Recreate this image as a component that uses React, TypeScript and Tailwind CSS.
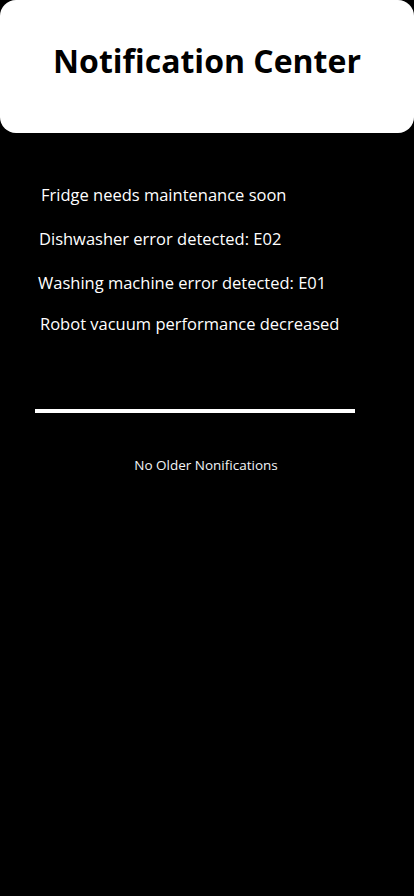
import React from "react";

const items = [
  { text: "Fridge needs maintenance soon", ml: "ml-[41px]" },
  { text: "Dishwasher error detected: E02", ml: "ml-[39px]" },
  { text: "Washing machine error detected: E01", ml: "ml-[38px]" },
  { text: "Robot vacuum performance decreased", ml: "ml-[40px]" },
];

export default function App() {
  return (
    <div className="w-[414px] h-[896px] bg-black overflow-hidden" style={{ fontFamily: '"Open Sans", sans-serif' }}>
      <div className="h-[133px] bg-white rounded-[16px] flex items-center justify-center pb-[12px]">
        <h1 className="text-[32px] font-bold text-black leading-none">Notification Center</h1>
      </div>
      <div className="flex flex-col pt-[52px]">
        <p className={`text-white text-[16.5px] leading-[20px] ${items[0].ml}`}>{items[0].text}</p>
        <p className={`text-white text-[16.5px] leading-[20px] mt-[24px] ${items[1].ml}`}>{items[1].text}</p>
        <p className={`text-white text-[16.5px] leading-[20px] mt-[24px] ${items[2].ml}`}>{items[2].text}</p>
        <p className={`text-white text-[16.5px] leading-[20px] mt-[21px] ${items[3].ml}`}>{items[3].text}</p>
      </div>
      <div className="ml-[35px] mt-[75px] w-[320px] h-[4px] bg-white" />
      <p className="mt-[42px] text-center pr-[2px] text-[13.5px] text-gray-100">No Older Nonifications</p>
    </div>
  );
}
